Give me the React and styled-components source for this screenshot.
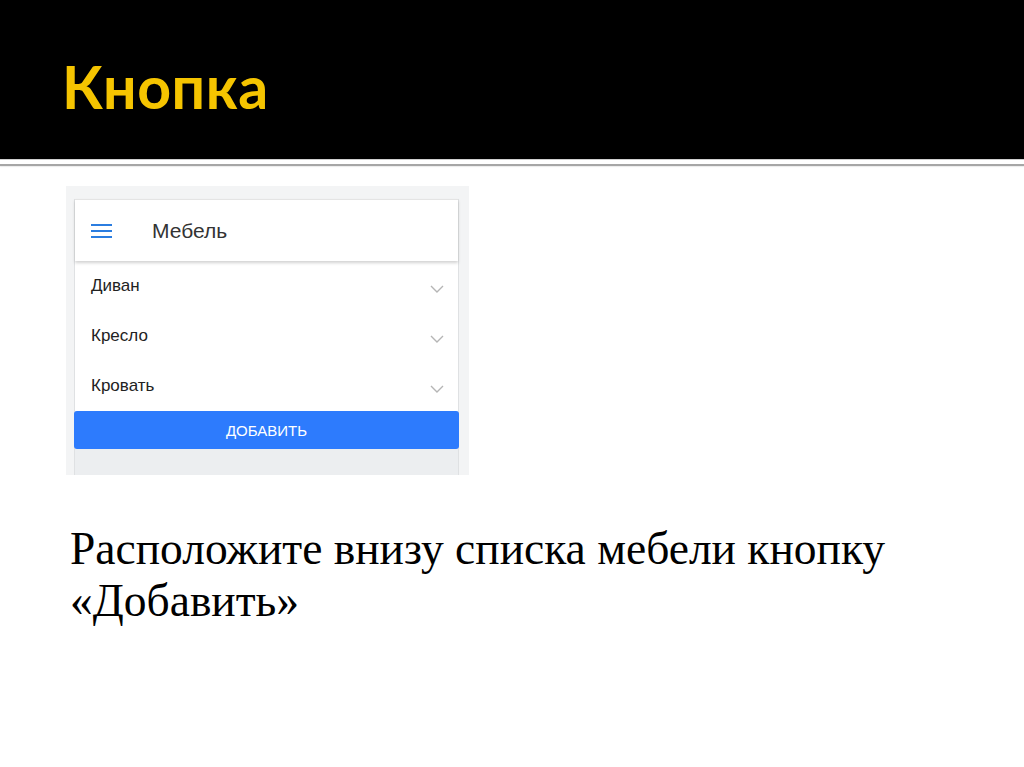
import React from "react";
import styled, { createGlobalStyle } from "styled-components";

const GlobalStyle = createGlobalStyle`
  html, body {
    margin: 0;
    padding: 0;
    background: #ffffff;
  }
  #root {
    width: 1024px;
    height: 767px;
    overflow: hidden;
  }
`;

const Slide = styled.div`
  width: 1024px;
  height: 767px;
  display: flex;
  flex-direction: column;
  background: #fff;
`;

const TitleBar = styled.header`
  height: 159px;
  background: #000;
  display: flex;
  align-items: center;
  padding-left: 62px;
  box-sizing: border-box;
`;

const Title = styled.h1`
  margin: 0;
  margin-top: 14px;
  color: #f5c400;
  font-family: Lato, "Liberation Sans", sans-serif;
  font-weight: 700;
  font-size: 59px;
  letter-spacing: 0.5px;
`;

const Divider = styled.div`
  height: 9px;
  border-top: 1px solid #cfcfcf;
  box-sizing: border-box;

  &::after {
    content: "";
    display: block;
    margin-top: 4px;
    height: 2px;
    background: #a6a6a6;
    box-shadow: 0 1px 1px rgba(0, 0, 0, 0.08);
  }
`;

const Content = styled.main`
  padding: 18px 0 0 66px;
  display: flex;
  flex-direction: column;
`;

const Frame = styled.div`
  width: 403px;
  height: 289px;
  background: #f3f4f5;
  padding: 13px 10px 0 8px;
  box-sizing: border-box;
  display: flex;
`;

const Card = styled.div`
  flex: 1;
  display: flex;
  flex-direction: column;
  background: #eceef0;
  border-left: 1px solid #dfe1e3;
  border-right: 1px solid #dfe1e3;
`;

const AppBar = styled.div`
  height: 62px;
  background: #fff;
  border-top: 1px solid #e4e4e4;
  display: flex;
  align-items: center;
  padding-left: 16px;
  gap: 40px;
  box-shadow: 0 2px 3px rgba(0, 0, 0, 0.18);
  position: relative;
  z-index: 1;
  box-sizing: border-box;
`;

const AppTitle = styled.span`
  font-family: "Liberation Sans", Arial, sans-serif;
  font-size: 21px;
  color: #333;
`;

const List = styled.div`
  background: #fff;
  display: flex;
  flex-direction: column;
`;

const Row = styled.div`
  height: 50px;
  display: flex;
  align-items: center;
  justify-content: space-between;
  padding: 0 14px 0 16px;
  font-family: "Liberation Sans", Arial, sans-serif;
  font-size: 17px;
  color: #222;
`;

const Chevron = styled.svg`
  margin-top: 6px;
`;

const AddButton = styled.button`
  height: 38px;
  border: none;
  border-radius: 3px;
  background: #2d7bfd;
  color: #fff;
  font-family: "Liberation Sans", Arial, sans-serif;
  font-size: 15px;
  font-weight: 400;
  margin: 0 -1px;
`;

const Text = styled.p`
  margin: 48px 0 0 4px;
  font-family: "Liberation Serif", "Times New Roman", serif;
  font-size: 45.5px;
  line-height: 52px;
  color: #000;
  width: 900px;
`;

function Menu() {
  return (
    <svg width="21" height="14" viewBox="0 0 21 14">
      <rect x="0" y="0" width="21" height="2" fill="#2b7de0" />
      <rect x="0" y="6" width="21" height="2" fill="#2b7de0" />
      <rect x="0" y="12" width="21" height="2" fill="#2b7de0" />
    </svg>
  );
}

const items = ["Диван", "Кресло", "Кровать"];

export default function App() {
  return (
    <>
      <GlobalStyle />
      <Slide>
        <TitleBar>
          <Title>Кнопка</Title>
        </TitleBar>
        <Divider />
        <Content>
          <Frame>
            <Card>
              <AppBar>
                <Menu />
                <AppTitle>Мебель</AppTitle>
              </AppBar>
              <List>
                {items.map((item) => (
                  <Row key={item}>
                    {item}
                    <Chevron width="14" height="8" viewBox="0 0 14 8">
                      <path d="M1 1 L7 7 L13 1" fill="none" stroke="#b5b5b5" strokeWidth="1.4" />
                    </Chevron>
                  </Row>
                ))}
              </List>
              <AddButton>ДОБАВИТЬ</AddButton>
            </Card>
          </Frame>
          <Text>
            Расположите внизу списка мебели кнопку
            <br />
            «Добавить»
          </Text>
        </Content>
      </Slide>
    </>
  );
}
